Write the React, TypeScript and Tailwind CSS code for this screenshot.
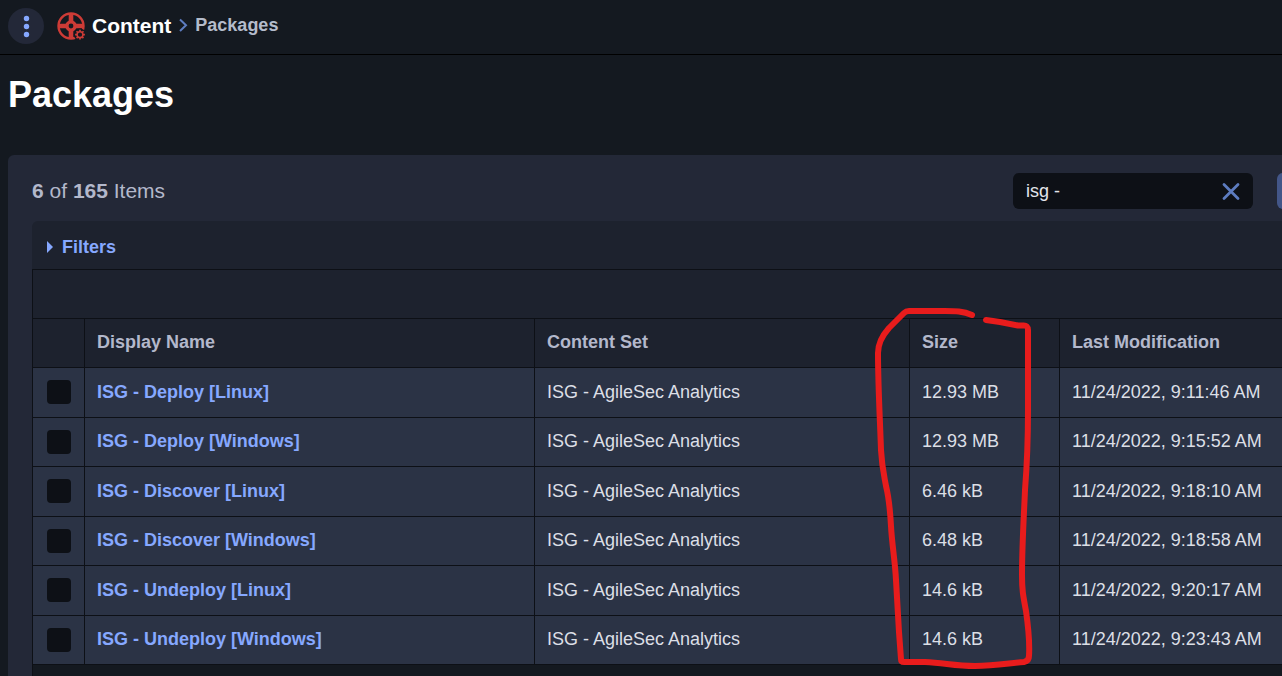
import { useState } from "react";

interface PackageRow {
  name: string;
  contentSet: string;
  size: string;
  modified: string;
}

const TOTAL_ITEMS = 165;

const PACKAGES: PackageRow[] = [
  { name: "ISG - Deploy [Linux]", contentSet: "ISG - AgileSec Analytics", size: "12.93 MB", modified: "11/24/2022, 9:11:46 AM" },
  { name: "ISG - Deploy [Windows]", contentSet: "ISG - AgileSec Analytics", size: "12.93 MB", modified: "11/24/2022, 9:15:52 AM" },
  { name: "ISG - Discover [Linux]", contentSet: "ISG - AgileSec Analytics", size: "6.46 kB", modified: "11/24/2022, 9:18:10 AM" },
  { name: "ISG - Discover [Windows]", contentSet: "ISG - AgileSec Analytics", size: "6.48 kB", modified: "11/24/2022, 9:18:58 AM" },
  { name: "ISG - Undeploy [Linux]", contentSet: "ISG - AgileSec Analytics", size: "14.6 kB", modified: "11/24/2022, 9:20:17 AM" },
  { name: "ISG - Undeploy [Windows]", contentSet: "ISG - AgileSec Analytics", size: "14.6 kB", modified: "11/24/2022, 9:23:43 AM" },
];

const GEAR_TEETH = [0, 45, 90, 135, 180, 225, 270, 315];

function ContentIcon() {
  return (
    <svg className="h-7 w-7 shrink-0" viewBox="0 0 28 28" fill="none" aria-hidden="true">
      {/* wheel */}
      <circle cx="14" cy="14" r="12.5" stroke="#cd3b36" strokeWidth="2.4" />
      <path d="M14 1v9M14 18v9M1 14h9M18 14h9" stroke="#cd3b36" strokeWidth="4.6" />
      <circle cx="14" cy="14" r="4.1" stroke="#cd3b36" strokeWidth="3.4" />
      {/* gear, cut out of the rim */}
      <circle cx="23" cy="22.7" r="6.2" fill="#141920" />
      {GEAR_TEETH.map((deg) => (
        <path key={deg} d="M23 19.7V17.8" stroke="#cd3b36" strokeWidth="1.7" transform={`rotate(${deg} 23 22.7)`} />
      ))}
      <circle cx="23" cy="22.7" r="2.9" stroke="#cd3b36" strokeWidth="1.5" />
    </svg>
  );
}

function TopBar() {
  return (
    <header className="flex h-[55px] items-center border-b border-black px-2 pb-0.5">
      <button
        type="button"
        aria-label="Open menu"
        className="flex h-9 w-9 shrink-0 items-center justify-center rounded-full bg-[#232838]"
      >
        <svg className="h-6 w-6" viewBox="0 0 24 24" fill="#86a8ff" aria-hidden="true">
          <circle cx="12.5" cy="4.5" r="2.7" />
          <circle cx="12.5" cy="12.5" r="2.7" />
          <circle cx="12.5" cy="20.5" r="2.7" />
        </svg>
      </button>
      <nav aria-label="Breadcrumb" className="ml-[13px] flex items-center">
        <ContentIcon />
        <a href="#content" className="ml-[7px] text-[21px] leading-6 font-bold text-white">
          Content
        </a>
        <svg className="ml-1.5 h-4 w-3" viewBox="0 0 12 16" fill="none" aria-hidden="true">
          <path d="M3 1.500l6 5.700-6 5.700" stroke="#5d7cc0" strokeWidth="2" />
        </svg>
        <a href="#packages" className="ml-1.5 pb-0.5 text-[18px] leading-6 font-bold text-[#b4bccb]">
          Packages
        </a>
      </nav>
    </header>
  );
}

function SearchBox({ value, onChange }: { value: string; onChange: (v: string) => void }) {
  return (
    <div className="flex h-9 w-60 items-center rounded-md bg-[#0d1016] pr-3 pl-[13px]">
      <input
        type="text"
        aria-label="Search packages"
        value={value}
        onChange={(e) => onChange(e.target.value)}
        className="min-w-0 flex-1 bg-transparent text-[18px] leading-6 text-[#e3e5ea] outline-none"
      />
      <button type="button" aria-label="Clear search" onClick={() => onChange("")}>
        <svg className="h-5 w-5" viewBox="0 0 20 20" fill="none" aria-hidden="true">
          <path d="M3 3.500l14 14M17 3.500l-14 14" stroke="#5d7cc0" strokeWidth="2.8" strokeLinecap="round" />
        </svg>
      </button>
    </div>
  );
}

function PackageTable({ rows }: { rows: PackageRow[] }) {
  return (
    <table className="w-full table-fixed border-separate border-spacing-0 text-left text-[18px] leading-6">
      <colgroup>
        <col className="w-[52px]" />
        <col className="w-[450px]" />
        <col className="w-[375px]" />
        <col className="w-[150px]" />
        <col />
      </colgroup>
      <thead>
        <tr className="h-[49px] bg-[#1d222e] text-[#b3b8cb]">
          <td className="border-r border-b border-[#0d1016]" />
          <th className="border-r border-b border-[#0d1016] px-3 pb-0.5 font-bold">Display Name</th>
          <th className="border-r border-b border-[#0d1016] px-3 pb-0.5 font-bold">Content Set</th>
          <th className="border-r border-b border-[#0d1016] px-3 pb-0.5 font-bold">Size</th>
          <th className="border-b border-[#0d1016] px-3 pb-0.5 font-bold whitespace-nowrap">Last Modification</th>
        </tr>
      </thead>
      <tbody>
        {rows.map((row) => (
          <tr key={row.name} className="bg-[#2b3345] text-[#dcdfe6] odd:h-[50px] even:h-[49px]">
            <td className="border-r border-b border-[#0d1016] pb-px pl-3.5">
              <input
                type="checkbox"
                aria-label={`Select ${row.name}`}
                className="block h-6 w-6 appearance-none rounded bg-[#0d1016] checked:bg-[#86a8ff]"
              />
            </td>
            <td className="border-r border-b border-[#0d1016] px-3 pb-0.5">
              <a href="#package" className="font-bold text-[#86a8ff]">
                {row.name}
              </a>
            </td>
            <td className="border-r border-b border-[#0d1016] px-3 pb-0.5">{row.contentSet}</td>
            <td className="border-r border-b border-[#0d1016] px-3 pb-0.5">{row.size}</td>
            <td className="border-b border-[#0d1016] pb-0.5 pl-3 whitespace-nowrap">{row.modified}</td>
          </tr>
        ))}
      </tbody>
    </table>
  );
}

// Hand-drawn marker around the Size column.
function SizeMarker() {
  return (
    <svg
      className="pointer-events-none absolute top-[300px] left-[870px] h-[376px] w-[170px]"
      viewBox="870 300 170 376"
      fill="none"
      stroke="#e81c1c"
      strokeWidth="6"
      strokeLinecap="round"
      strokeLinejoin="round"
      aria-hidden="true"
    >
      <path d="M972 315C963 311 955 311 945 311H909Q906 311 904 313L889 328C881 337 878 344 878 353C878 385 880 420 881 450C882 468 884 475 886 486C889 498 890 508 891 526C892 545 895 560 896 580L899 632L901 659Q901 662 904 662H925C945 663 955 666 975 666C995 666 1010 663 1024 662Q1029 661 1029 656C1030 640 1028 625 1026 611C1023 595 1022 590 1022 575C1022 545 1024 515 1025 490C1027 465 1028 440 1028 410V330Q1028 325 1023 325.500H1018L1000 322L986 320" />
    </svg>
  );
}

export default function App() {
  const [query, setQuery] = useState("isg -");
  const [filtersOpen, setFiltersOpen] = useState(false);

  const rows = PACKAGES.filter((p) => p.name.toLowerCase().includes(query.toLowerCase()));

  return (
    <div className="relative flex min-h-screen flex-col overflow-hidden bg-[#141920] font-['Liberation_Sans',Arial,sans-serif]">
      <TopBar />
      <h1 className="mt-5 mb-10 ml-2 text-[36px] leading-10 font-bold text-white">Packages</h1>

      <main className="ml-2 flex flex-1 flex-col overflow-hidden rounded-tl-md bg-[#232837] pl-6">
        <div className="flex items-center justify-between pt-[18px] pb-3">
          <p className="text-[21px] leading-6 text-[#b3b8cb]">
            <b>{rows.length}</b> of <b>{TOTAL_ITEMS}</b> Items
          </p>
          <div className="flex gap-6">
            <SearchBox value={query} onChange={setQuery} />
            {/* runs past the right edge of the window */}
            <button type="button" aria-label="More actions" className="-mr-[31px] h-9 w-9 rounded-md bg-[#435688]" />
          </div>
        </div>

        <div className="flex h-12 items-center rounded-tl-md bg-[#1d222e] pt-1 pl-3.5">
          <button
            type="button"
            aria-expanded={filtersOpen}
            onClick={() => setFiltersOpen(!filtersOpen)}
            className="flex items-center gap-2 text-[18px] leading-6 font-bold text-[#86a8ff]"
          >
            <svg className="h-3 w-2" viewBox="0 0 8 12" fill="#86a8ff" aria-hidden="true">
              <path d="M1 0l6 6-6 6z" />
            </svg>
            Filters
          </button>
        </div>

        <div className="flex-1 border-t border-l border-[#0d1016] bg-[#141920]">
          <div className="h-[49px] border-b border-[#0d1016] bg-[#1d222e]" />
          <PackageTable rows={rows} />
        </div>
      </main>

      <SizeMarker />
    </div>
  );
}
